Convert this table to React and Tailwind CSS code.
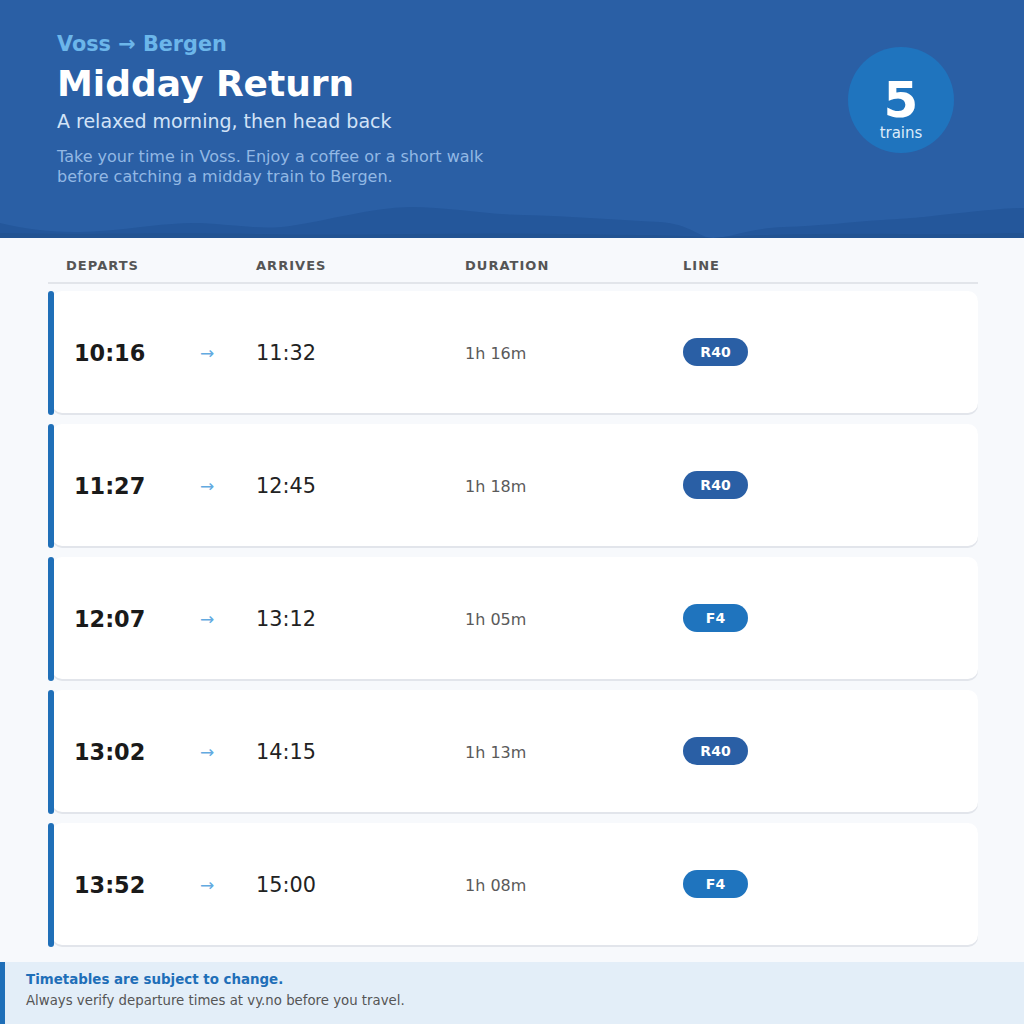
const trains = [
    { dep: "10:16", arr: "11:32", dur: "1h 16m", line: "R40" },
    { dep: "11:27", arr: "12:45", dur: "1h 18m", line: "R40" },
    { dep: "12:07", arr: "13:12", dur: "1h 05m", line: "F4" },
    { dep: "13:02", arr: "14:15", dur: "1h 13m", line: "R40" },
    { dep: "13:52", arr: "15:00", dur: "1h 08m", line: "F4" },
];

const Wave = () => (
    <svg className="absolute bottom-0 left-0 w-full h-[40px]" viewBox="0 0 1024 40" preserveAspectRatio="none">
        <path
            d="M0 25 C30 32 60 36 100 33 C140 30 170 24 200 25 C240 27 260 32 290 28 C330 22 370 10 410 9 C450 9 480 16 523 17 C570 18 620 22 660 24 C690 26 700 40 713 40 C730 40 750 30 784 29 C820 28 850 24 882 22 C920 20 930 18 960 15 C990 12 1010 10 1024 10 L1024 40 L0 40 Z"
            fill="#24579b"
        />
        <path
            d="M0 35 C80 37 160 34 260 36 C360 38 460 34 560 36 C640 37 690 37 713 40 C740 37 820 35 900 36 C960 37 1000 35 1024 35 L1024 40 L0 40 Z"
            fill="#225392"
        />
    </svg>
);

const App = () => {
    return (
        <div className="w-[1024px] h-[1024px] bg-[#f7f9fc] flex flex-col overflow-hidden" style={{ fontFamily: '"DejaVu Sans", sans-serif' }}>
            {/* header */}
            <div className="relative h-[238px] shrink-0 bg-[#2a5fa5] pl-[57px] pr-[70px] pt-[30px] flex justify-between items-start">
                <div className="relative">
                    <div className="text-[20.8px] leading-[28px] font-bold text-[#6cb6ea]">Voss → Bergen</div>
                    <h1 className="mt-[4px] text-[36px] leading-[44px] font-bold text-white">Midday Return</h1>
                    <div className="mt-[3px] text-[19px] leading-[24px] text-[#d2e3f7]">A relaxed morning, then head back</div>
                    <p className="mt-[14px] text-[16px] leading-[20px] text-[#92b8e4]">
                        Take your time in Voss. Enjoy a coffee or a short walk
                        <br />
                        before catching a midday train to Bergen.
                    </p>
                </div>
                <div className="relative mt-[17px] w-[106px] h-[106px] rounded-full bg-[#1f74be] flex flex-col items-center pt-[30px] text-white">
                    <div className="text-[50px] leading-[46px] font-bold">5</div>
                    <div className="mt-[2px] text-[15px] leading-[16px] text-[#dcebf9]">trains</div>
                </div>
                <Wave />
            </div>

            {/* table */}
            <div className="pl-[48px] pr-[46px] pt-[20px]">
                <div className="flex pl-[18px] pb-[8px] border-b-2 border-[#e2e5ea] text-[13px] leading-[16px] font-bold tracking-[0.08em] text-[#555]">
                    <div className="w-[190px]">DEPARTS</div>
                    <div className="w-[209px]">ARRIVES</div>
                    <div className="w-[218px]">DURATION</div>
                    <div>LINE</div>
                </div>

                <div className="mt-[7px] flex flex-col gap-[9px]">
                    {trains.map((t) => (
                        <div key={t.dep} className="flex h-[124px]">
                            <div className="w-[6px] h-full rounded-full bg-[#1f6fb8] relative z-10"></div>
                            <div className="-ml-[2px] flex-1 h-[122px] bg-white rounded-[10px] shadow-[0_2px_0_#e2e5eb] flex items-center pl-[22px] pt-[3px]">
                                <div className="w-[182px] flex items-center">
                                    <div className="w-[126px] text-[22.4px] font-bold text-[#1a1a1a]">{t.dep}</div>
                                    <div className="text-[17px] text-[#62aae0]">→</div>
                                </div>
                                <div className="w-[209px] text-[20.8px] text-[#222]">{t.arr}</div>
                                <div className="w-[218px] text-[16px] text-[#5a5a5a]">{t.dur}</div>
                                <div
                                    className={
                                        t.line === "F4"
                                            ? "-mt-[3px] w-[65px] h-[28px] rounded-full bg-[#1f74be] flex items-center justify-center text-[14px] font-bold text-white"
                                            : "-mt-[3px] w-[65px] h-[28px] rounded-full bg-[#2a5fa5] flex items-center justify-center text-[14px] font-bold text-white"
                                    }
                                >
                                    {t.line}
                                </div>
                            </div>
                        </div>
                    ))}
                </div>
            </div>

            {/* footer note */}
            <div className="mt-[15px] flex-1 bg-[#e3eef8] border-l-[5px] border-[#1f6fb8] pl-[21px] pt-[9px]">
                <div className="text-[13.4px] leading-[18px] font-bold text-[#1f6fb8]">Timetables are subject to change.</div>
                <div className="mt-[3px] text-[13.3px] leading-[18px] text-[#555]">Always verify departure times at vy.no before you travel.</div>
            </div>
        </div>
    );
};

export default App;
